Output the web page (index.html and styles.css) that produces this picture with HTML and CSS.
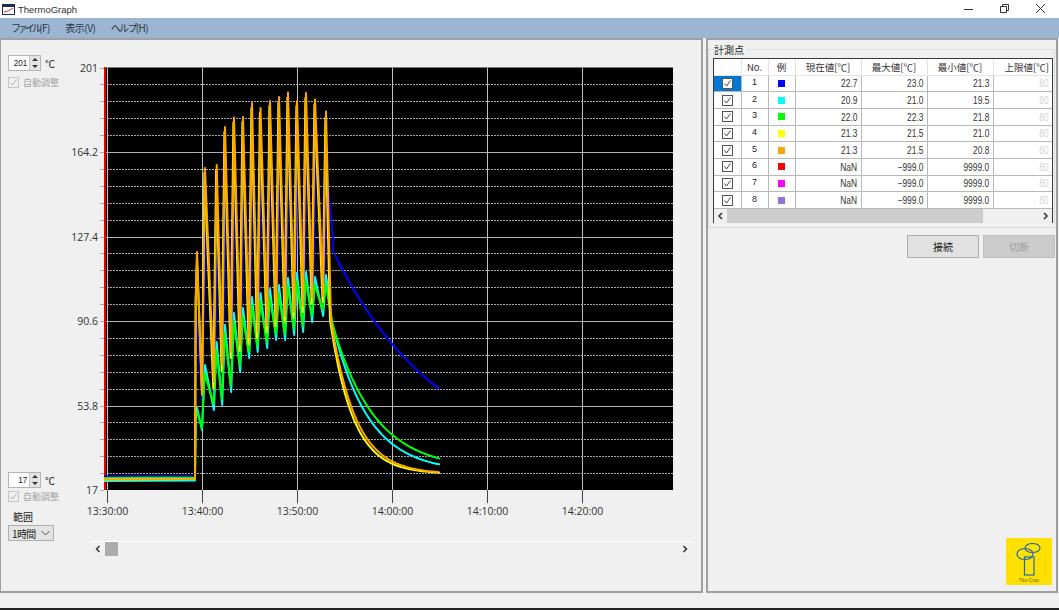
FILE: index.html
```html
<!DOCTYPE html>
<html lang="ja">
<head>
    <meta charset="UTF-8">
    <title>ThermoGraph</title>
    <link rel="stylesheet" href="styles.css">
</head>
<body>

    <!-- Title bar -->
    <div class="titlebar">
        <svg class="app-icon" width="13" height="11" viewBox="0 0 13 11">
            <rect x="0.5" y="0.5" width="12" height="10" fill="#fff" stroke="#1c2a55"/>
            <rect x="1" y="1" width="11" height="2" fill="#1c2a55"/>
            <path d="M2 8 L6 7 L11 4" fill="none" stroke="#d04040"/>
        </svg>
        <span class="app-title">ThermoGraph</span>
        <div class="win-buttons">
            <svg width="12" height="12" viewBox="0 0 12 12"><path d="M1 6.5 H10" stroke="#333"/></svg>
            <svg width="12" height="12" viewBox="0 0 12 12"><path d="M1.5 3.5 H7.5 V9.5 H1.5 Z M3.5 3.5 V1.5 H9.5 V7.5 H7.5" fill="none" stroke="#333"/></svg>
            <svg width="12" height="12" viewBox="0 0 12 12"><path d="M1 1 L10 10 M10 1 L1 10" stroke="#333"/></svg>
        </div>
    </div>

    <!-- Menu -->
    <div class="menubar">
        <span><span class="menu-file">ファイル</span>(F)</span>
        <span>表示(V)</span>
        <span><span class="menu-help">ヘルプ</span>(H)</span>
    </div>

    <div class="main">

        <!-- Graph panel -->
        <div class="panel graph-panel">
            <div class="side">
                <div class="side-group">
                    <div class="spin-row">
                        <div class="spinner">
                            <span class="spin-value">201</span>
                            <span class="spin-arrows"><i class="up"></i><i class="down"></i></span>
                        </div>
                        <span class="unit">℃</span>
                    </div>
                    <label class="auto-check">
                        <svg class="disabled-box" width="11" height="11" viewBox="0 0 11 11"><rect x="0.5" y="0.5" width="10" height="10" fill="none" stroke="#c4c4c4"/><path d="M2.5 5.5 L4.5 8 L8.5 2.5" fill="none" stroke="#b4b4b4"/></svg>
                        自動調整
                    </label>
                </div>
                <div class="side-group">
                    <div class="spin-row">
                        <div class="spinner">
                            <span class="spin-value">17</span>
                            <span class="spin-arrows"><i class="up"></i><i class="down"></i></span>
                        </div>
                        <span class="unit">℃</span>
                    </div>
                    <label class="auto-check">
                        <svg class="disabled-box" width="11" height="11" viewBox="0 0 11 11"><rect x="0.5" y="0.5" width="10" height="10" fill="none" stroke="#c4c4c4"/><path d="M2.5 5.5 L4.5 8 L8.5 2.5" fill="none" stroke="#b4b4b4"/></svg>
                        自動調整
                    </label>
                    <div class="range-label">範囲</div>
                    <div class="range-select">
                        <span>1時間</span>
                        <svg width="9" height="6" viewBox="0 0 9 6"><path d="M0.5 1 L4.5 5 L8.5 1" fill="none" stroke="#555"/></svg>
                    </div>
                </div>
            </div>
            <div class="graph-col">
                <svg id="graph" class="graph" width="628" height="501"></svg>
                <div class="hscroll">
                    <svg width="12" height="14" viewBox="0 0 12 14"><path d="M7.5 4 L4.5 7 L7.5 10" fill="none" stroke="#333" stroke-width="1.5"/></svg>
                    <div class="hscroll-track"><div class="hscroll-thumb"></div></div>
                    <svg width="12" height="14" viewBox="0 0 12 14"><path d="M4.5 4 L7.5 7 L4.5 10" fill="none" stroke="#333" stroke-width="1.5"/></svg>
                </div>
            </div>
        </div>

        <!-- Measuring points panel -->
        <div class="panel points-panel">
            <div class="groupbox">
                <span class="groupbox-title">計測点</span>
                <div class="table-wrap">
                    <table class="points">
                        <thead>
                            <tr>
                                <th class="c-check"></th>
                                <th class="c-no">No.</th>
                                <th class="c-color">例</th>
                                <th class="c-val">現在値[℃]</th>
                                <th class="c-val">最大値[℃]</th>
                                <th class="c-val">最小値[℃]</th>
                                <th class="c-limit">上限値[℃]</th>
                            </tr>
                        </thead>
                        <tbody id="points-body"></tbody>
                    </table>
                    <div class="table-scroll">
                        <svg width="13" height="14" viewBox="0 0 13 14"><path d="M8 4 L5 7 L8 10" fill="none" stroke="#333" stroke-width="1.5"/></svg>
                        <div class="table-scroll-track"><div class="table-scroll-thumb"></div></div>
                        <svg width="13" height="14" viewBox="0 0 13 14"><path d="M5 4 L8 7 L5 10" fill="none" stroke="#333" stroke-width="1.5"/></svg>
                    </div>
                </div>
            </div>
            <div class="buttons">
                <button class="btn">接続</button>
                <button class="btn" disabled>切断</button>
            </div>
            <div class="logo">
                <svg width="46" height="39" viewBox="0 0 46 39">
                    <ellipse cx="26.5" cy="10" rx="7.5" ry="4.5" fill="none" stroke="#1e6ab0" stroke-width="1.2"/>
                    <ellipse cx="19" cy="16" rx="8" ry="5.5" fill="none" stroke="#1e6ab0" stroke-width="1.2"/>
                    <rect x="18.5" y="19" width="9.5" height="18" fill="none" stroke="#1e6ab0" stroke-width="1.2"/>
                </svg>
                <span class="logo-text">Tito-Crac</span>
            </div>
        </div>
    </div>

    <div class="statusbar"></div>

    <script src="chart.js"></script>
</body>
</html>
```

FILE: styles.css
```css
html, body {
    margin: 0;
    height: 100%;
    overflow: hidden;
}

body {
    display: flex;
    flex-direction: column;
    width: 1059px;
    height: 610px;
    background-color: #f0f0f0;
    color: #222;
    font-family: "Noto Sans CJK JP", "Noto Sans", sans-serif;
    font-size: 10px;
}

/* Title bar */
.titlebar {
    display: flex;
    align-items: center;
    height: 18px;
    background-color: #fff;
    padding-left: 2px;
}

.app-icon {
    margin-right: 3px;
}

.app-title {
    font-family: "Liberation Sans", sans-serif;
    font-size: 9.5px;
    color: #333;
}

.win-buttons {
    margin-left: auto;
    margin-right: 12px;
    display: flex;
    gap: 24px;
}

/* Menu */
.menubar {
    display: flex;
    align-items: center;
    gap: 15.5px;
    height: 20px;
    padding-left: 11px;
    padding-bottom: 2px;
    background-color: #9bb5d2;
    color: #2b3442;
    font-size: 10px;
    letter-spacing: -0.5px;
    box-sizing: border-box;
}

.menu-file { letter-spacing: -3px; }
.menu-help { letter-spacing: -1.7px; }

/* Panels */
.main {
    display: flex;
    flex: 1;
    min-height: 0;
    gap: 3px;
}

.panel {
    box-sizing: border-box;
    border: 1px solid #a0a0a0;
    border-top-width: 2px;
    border-bottom-width: 2px;
    background-color: #f0f0f0;
}

.graph-panel {
    display: flex;
    width: 703px;
    border-right-width: 2px;
}

.points-panel {
    display: flex;
    flex-direction: column;
    width: 352px;
    border-left-width: 2px;
    border-right-width: 2px;
    padding: 9px 0 6px 0;
}

.statusbar {
    height: 17px;
    border-bottom: 2px solid #222;
    box-sizing: border-box;
}

/* Left controls */
.side {
    display: flex;
    flex-direction: column;
    justify-content: space-between;
    flex: none;
    width: 70px;
    padding: 15px 0 50px 7px;
    box-sizing: border-box;
}

.spin-row {
    display: flex;
    align-items: center;
    gap: 4px;
}

.spinner {
    display: flex;
    width: 33px;
    height: 16px;
    box-sizing: border-box;
    border: 1px solid #b4b4b4;
    background-color: #fff;
}

.spin-value {
    flex: 1;
    text-align: right;
    padding-right: 2px;
    font-family: "Liberation Sans", sans-serif;
    font-size: 9.5px;
    line-height: 13px;
    transform: scaleX(0.85);
    transform-origin: right center;
}

.spin-arrows {
    display: flex;
    flex-direction: column;
    width: 10px;
    background-color: #e4e4e4;
    border-left: 1px solid #c8c8c8;
}

.spin-arrows i {
    flex: 1;
    display: flex;
    justify-content: center;
    align-items: center;
}

.spin-arrows i::before {
    content: "";
    border-left: 3px solid transparent;
    border-right: 3px solid transparent;
}

.spin-arrows .up::before {
    border-bottom: 3px solid #333;
}

.spin-arrows .down::before {
    border-top: 3px solid #333;
}

.unit {
    font-size: 10px;
}

.auto-check {
    display: flex;
    align-items: center;
    gap: 4px;
    margin-top: 5px;
    color: #a4a4a4;
    font-size: 9px;
}

.side-group:last-child .auto-check {
    margin-top: 2px;
}

.range-label {
    margin-top: 8px;
    margin-left: 5px;
    line-height: 12px;
}

.range-select {
    display: flex;
    align-items: center;
    justify-content: space-between;
    width: 46px;
    height: 16px;
    margin-top: 2px;
    padding: 0 3px;
    box-sizing: border-box;
    background-color: #e4e4e4;
    border: 1px solid #b0b0b0;
    letter-spacing: -0.6px;
}

/* Graph */
.graph-col {
    display: flex;
    flex-direction: column;
}

.graph {
    display: block;
}

.graph text {
    font-family: "Open Sans", sans-serif;
    font-size: 10.5px;
    fill: #333;
}

.hscroll {
    display: flex;
    align-items: center;
    width: 599px;
    height: 14px;
    margin-left: 21px;
    border-top: 1px solid #fff;
}

.hscroll-track {
    flex: 1;
    padding-left: 1px;
}

.hscroll-thumb {
    width: 13px;
    height: 14px;
    background-color: #acacac;
}

/* Measuring points */
.groupbox {
    position: relative;
    flex: none;
    width: 347px;
    height: 179px;
    box-sizing: border-box;
    border: 1px solid #dcdcdc;
    padding: 8px 0 0 4px;
}

.groupbox-title {
    position: absolute;
    top: -6px;
    left: 5px;
    padding-right: 3px;
    background-color: #f0f0f0;
    line-height: 12px;
}

.table-wrap {
    box-sizing: border-box;
    width: 340px;
    height: 165px;
    border: 1px solid #3a3a3a;
    background-color: #f0f0f0;
}

.points {
    width: 338px;
    border-collapse: collapse;
    table-layout: fixed;
    background-color: #fff;
}

.points td {
    height: 16.7px;
    padding: 0 3px;
    border: 1px solid #b8b8b8;
    box-sizing: border-box;
    white-space: nowrap;
    overflow: hidden;
    line-height: 12px;
}

.points th {
    height: 16px;
    padding: 0 3px;
    border: 1px solid #e4e4e4;
    border-top: none;
    box-sizing: border-box;
    font-weight: normal;
    white-space: nowrap;
    overflow: hidden;
    line-height: 12px;
    color: #333;
    font-size: 9.5px;
    text-align: center;
}

.points th:first-child,
.points td:first-child {
    border-left: none;
}

.points th:last-child,
.points td:last-child {
    border-right: none;
}

.c-check { width: 27px; }
.c-no { width: 27px; }
.c-color { width: 27px; }
.c-val { width: 66px; }

.points th.c-limit {
    text-align: right;
    padding: 0 3px 0 0;
}

.points td.num {
    text-align: right;
    font-family: "Liberation Sans", sans-serif;
    font-size: 10.5px;
    color: #333;
}

.points td.num span {
    display: inline-block;
    transform: scaleX(0.8);
    transform-origin: right center;
}

.points td.limit {
    color: #d4d4d4;
}

.points td.no {
    text-align: center;
    font-family: "Liberation Sans", sans-serif;
    font-size: 9px;
    padding-bottom: 3px;
}

.points td.check {
    padding: 0;
    text-align: center;
    line-height: 0;
}

.points td.selected {
    background-color: #0078d7;
}

.check-box {
    vertical-align: middle;
}

.swatch {
    display: block;
    width: 7px;
    height: 7px;
    margin: 0 auto;
}

.table-scroll {
    display: flex;
    align-items: center;
    height: 14px;
    background-color: #f0f0f0;
}

.table-scroll-track {
    flex: 1;
}

.table-scroll-thumb {
    width: 256px;
    height: 14px;
    background-color: #cdcdcd;
}

.buttons {
    display: flex;
    justify-content: flex-end;
    gap: 4px;
    margin-top: 7px;
    padding-right: 1px;
}

.btn {
    width: 72px;
    height: 23px;
    background-color: #e1e1e1;
    border: 1px solid #adadad;
    color: #222;
    font-family: inherit;
    font-size: 10px;
    padding: 0;
}

.btn:disabled {
    background-color: #cccccc;
    border-color: #bfbfbf;
    color: #a0a0a0;
}

.logo {
    align-self: flex-end;
    margin-top: auto;
    margin-right: 4px;
    width: 46px;
    height: 47px;
    background-color: #ffe000;
}

.logo svg {
    display: block;
}

.logo-text {
    display: block;
    text-align: center;
    font-family: "Liberation Sans", sans-serif;
    font-size: 5px;
    line-height: 6px;
    color: #6a6a30;
}
```

FILE: chart.js
```js
// Draws the temperature graph and fills the measuring points table.
// All graph coordinates are window pixels, the group below shifts them into the svg.
const NS = 'http://www.w3.org/2000/svg';
const svg = document.getElementById('graph');
const root = document.createElementNS(NS, 'g');
root.setAttribute('transform', 'translate(-71 -40)');
svg.appendChild(root);

function add(tag, attrs, text) {
    const el = document.createElementNS(NS, tag);
    Object.keys(attrs).forEach(k => el.setAttribute(k, attrs[k]));
    if (text) el.textContent = text;
    root.appendChild(el);
    return el;
}

const LEFT = 104, RIGHT = 673, TOP = 67.5, BOTTOM = 490;
add('rect', { x: LEFT, y: TOP, width: RIGHT - LEFT, height: BOTTOM - TOP, fill: '#000' });

// horizontal grid, every fifth line is solid
const yLabels = ['201', '164.2', '127.4', '90.6', '53.8', '17'];
for (let i = 0; i <= 25; i++) {
    const y = Math.round(TOP + (BOTTOM - TOP) * i / 25) + 0.5;
    const solid = i % 5 === 0;
    if (i > 0 && i < 25) {
        add('line', {
            x1: LEFT, x2: RIGHT, y1: y, y2: y,
            stroke: solid ? '#b0b0b0' : '#a8a8a8',
            'stroke-dasharray': solid ? 'none' : '2 1'
        });
    }
    add('line', { x1: LEFT - 4, x2: LEFT, y1: y, y2: y, stroke: '#aaa' });
    if (solid) {
        add('text', { x: LEFT - 6, y: y + 3, 'text-anchor': 'end' }, yLabels[i / 5]);
    }
}

// vertical grid, each line carries a dark tick below the plot
const xLabels = ['13:30:00', '13:40:00', '13:50:00', '14:00:00', '14:10:00', '14:20:00'];
xLabels.forEach((label, i) => {
    const x = Math.round(107 + i * 95) + 0.5;
    add('line', { x1: x, x2: x, y1: TOP, y2: BOTTOM, stroke: '#c0c0c0' });
    add('line', { x1: x, x2: x, y1: BOTTOM, y2: 503, stroke: '#444' });
    add('text', { x: x, y: 515, 'text-anchor': 'middle' }, label);
});
add('rect', { x: 104, y: TOP, width: 2, height: BOTTOM - TOP, fill: '#e00000' });

// [x of the spike, orange top, cyan top, cyan bottom before the next spike, orange bottom]
const spikes = [
    [205, 168, 365, 410, 382],
    [216.7, 165, 342, 405, 365],
    [225, 127, 325, 392, 352],
    [234, 117.5, 313, 372, 345],
    [243, 117, 308, 358, 338],
    [252, 103, 297, 352, 332],
    [260.5, 108, 293, 348, 326],
    [270, 101, 289, 340, 320],
    [279, 97, 285, 340, 316],
    [288, 92.5, 278, 335, 312],
    [297, 101, 273, 332, 306],
    [306, 93, 272, 322, 298],
    [315, 99.5, 277, 316, 296]
];
const last = [326, 111.5, 275];

function decay(start, asym, tau, from, to) {
    const pts = [];
    for (let x = from; x <= to; x += 2) {
        pts.push([x, asym - (asym - start) * Math.exp(-(x - from) / tau)]);
    }
    return pts;
}

function series(opts) {
    const pts = [[104, opts.base], [150, opts.base - 0.3], [195, opts.base - 0.6]];
    pts.push([195.7, opts.first], [197, opts.firstTop], [202, opts.firstBottom]);
    spikes.forEach((s, i) => {
        const next = spikes[i + 1] ? spikes[i + 1][0] : last[0];
        pts.push([s[0] + opts.shift, opts.top(s)]);
        pts.push([next - 2.8 + opts.shift, opts.bottom(s)]);
    });
    pts.push([last[0] + opts.shift, opts.lastTop]);
    return pts.concat(opts.tail);
}

const lines = [
    {
        color: '#0000ff',
        pts: series({
            base: 476.5, first: 330, firstTop: 320, firstBottom: 400, shift: 0.8,
            top: s => s[1] + 62 - (s[0] - 205) * 0.1,
            bottom: s => s[4] + 4,
            lastTop: 170,
            tail: [[333, 240]].concat(decay(251, 470, 107, 333, 440))
        })
    },
    {
        color: '#00ffff',
        pts: series({
            base: 481, first: 412, firstTop: 408, firstBottom: 430, shift: 0,
            top: s => s[2],
            bottom: s => s[3],
            lastTop: 275,
            tail: decay(322, 472, 36, 332, 440)
        })
    },
    {
        color: '#00ff00',
        pts: series({
            base: 478, first: 416, firstTop: 412, firstBottom: 428, shift: -0.4,
            top: s => s[2] + 8,
            bottom: s => s[3] - 6,
            lastTop: 283,
            tail: decay(322, 470, 42, 332, 440)
        })
    },
    {
        color: '#ffff00',
        pts: series({
            base: 479.5, first: 300, firstTop: 258, firstBottom: 392, shift: -0.6,
            top: s => s[1] + 5,
            bottom: s => s[4] + 6,
            lastTop: 118,
            tail: decay(320, 474, 23, 330, 440)
        })
    },
    {
        color: '#ffa500',
        pts: series({
            base: 479.5, first: 300, firstTop: 252, firstBottom: 395, shift: 0,
            top: s => s[1],
            bottom: s => s[4],
            lastTop: 111.5,
            tail: decay(320, 474, 24.5, 331, 440)
        })
    }
];

lines.forEach(line => {
    add('polyline', {
        points: line.pts.map(p => p[0] + ',' + p[1].toFixed(1)).join(' '),
        fill: 'none',
        stroke: line.color,
        'stroke-width': 2,
        'stroke-linejoin': 'round'
    });
});

// Measuring points table
const rows = [
    ['22.7', '23.0', '21.3', '#0000ff'],
    ['20.9', '21.0', '19.5', '#00ffff'],
    ['22.0', '22.3', '21.8', '#00ff00'],
    ['21.3', '21.5', '21.0', '#ffff00'],
    ['21.3', '21.5', '20.8', '#ffa500'],
    ['NaN', '−999.0', '9999.0', '#ff0000'],
    ['NaN', '−999.0', '9999.0', '#ff00ff'],
    ['NaN', '−999.0', '9999.0', '#9370db']
];
const checkBox = '<svg class="check-box" width="11" height="11" viewBox="0 0 11 11">'
    + '<rect x="0.5" y="0.5" width="10" height="10" fill="#fff" stroke="#555"/>'
    + '<path d="M2.5 5.5 L4.5 8 L8.5 2.5" fill="none" stroke="#444"/></svg>';
const body = document.getElementById('points-body');
rows.forEach((row, i) => {
    const tr = document.createElement('tr');
    tr.innerHTML = `
        <td class="check${i === 0 ? ' selected' : ''}">${checkBox}</td>
        <td class="no">${i + 1}</td>
        <td><span class="swatch" style="background-color: ${row[3]}"></span></td>
        <td class="num"><span>${row[0]}</span></td>
        <td class="num"><span>${row[1]}</span></td>
        <td class="num"><span>${row[2]}</span></td>
        <td class="num limit"><span>80</span></td>
    `;
    body.appendChild(tr);
});
```
